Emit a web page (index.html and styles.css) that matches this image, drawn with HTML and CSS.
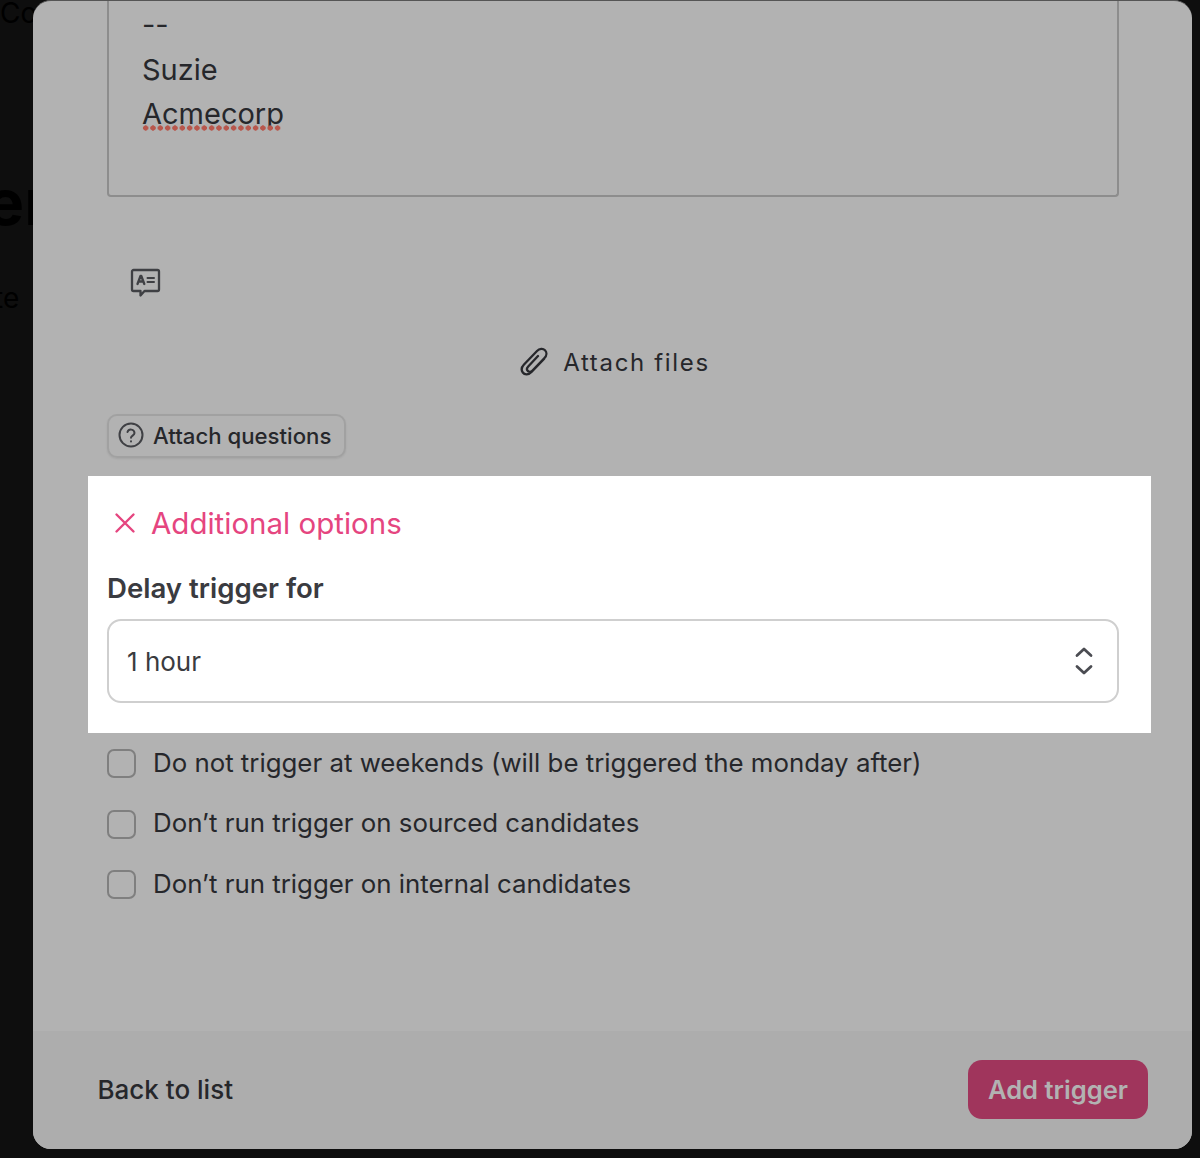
FILE: index.html
```html
<!DOCTYPE html>
<html lang="en">

<head>
    <meta charset="UTF-8" />
    <meta name="viewport" content="width=device-width, initial-scale=1.0" />
    <title>Add trigger</title>
    <link rel="stylesheet" href="styles.css">
</head>

<body>
    <div class="behind">
        <span class="behind-co">Co</span>
        <span class="behind-er">er</span>
        <span class="behind-te">te</span>
    </div>

    <div class="modal">
        <div class="modal-body">
            <div class="message">
                <div class="message-line dashes">--</div>
                <div class="message-line">Suzie</div>
                <div class="message-line"><span class="misspelled">Acmecorp</span></div>
            </div>

            <div class="template-icon">
                <svg width="32" height="32" viewBox="0 0 32 32" fill="none" stroke="#3f4044" stroke-width="2.300" stroke-linejoin="round" stroke-linecap="round">
                    <path d="M3.500 3h24a1.500 1.500 0 0 1 1.500 1.500v18a1.500 1.500 0 0 1-1.500 1.500h-13l-4 4.500v-4.500h-7a1.500 1.500 0 0 1-1.500-1.500v-18a1.500 1.500 0 0 1 1.500-1.500z" />
                    <path d="M7.500 17l3-8h.8l3 8M8.600 14.500h4.600" />
                    <path d="M17.500 11h6.500M17.500 15h6.500" stroke-width="2" />
                </svg>
            </div>

            <div class="attach-files">
                <svg width="28" height="30" viewBox="0 0 28 30" fill="none" stroke="#26272b" stroke-width="2.300" stroke-linecap="round" stroke-linejoin="round">
                    <path d="M24 12L11.500 25C8.500 28.200 4.500 28 2.800 25.500C1 23 1.600 20 4 17.500L17 4C19.500 1.400 23 1.200 25 3.200C27 5.200 26.800 8.500 24.500 11L12.500 23.500C11 25 9 25 7.800 24C6.600 22.800 6.800 21 8.200 19.500L18 9" />
                </svg>
                <span>Attach files</span>
            </div>

            <div class="attach-questions">
                <svg width="26" height="26" viewBox="0 0 26 26" fill="none" stroke="#3f4044" stroke-width="2" stroke-linecap="round" stroke-linejoin="round">
                    <circle cx="13" cy="13" r="11.500" />
                    <path d="M9.500 10a3.600 3.600 0 0 1 7 1.100c0 2.400-3.500 2.700-3.500 4.700" />
                    <path d="M13 19.200v.2" />
                </svg>
                <span>Attach questions</span>
            </div>

            <div class="highlight">
                <div class="options-toggle">
                    <svg width="22" height="22" viewBox="0 0 22 22" fill="none" stroke="#e5457f" stroke-width="2.400" stroke-linecap="round">
                        <path d="M2.500 2.500l17 17M19.500 2.500l-17 17" />
                    </svg>
                    <span>Additional options</span>
                </div>
                <div class="field-label">Delay trigger for</div>
                <div class="select">
                    <span>1 hour</span>
                    <svg width="18" height="28" viewBox="0 0 18 28" fill="none" stroke="#4b4c52" stroke-width="2.800" stroke-linecap="round" stroke-linejoin="round">
                        <path d="M2 8.500l7-6.500 7 6.500M2 19.500l7 6.500 7-6.500" />
                    </svg>
                </div>
            </div>

            <div class="checks">
                <label class="check"><span class="box"></span>Do not trigger at weekends (will be triggered the monday after)</label>
                <label class="check"><span class="box"></span>Don’t run trigger on sourced candidates</label>
                <label class="check"><span class="box"></span>Don’t run trigger on internal candidates</label>
            </div>
        </div>

        <div class="modal-footer">
            <span class="back">Back to list</span>
            <span class="add-btn">Add trigger</span>
        </div>
    </div>
</body>

</html>
```

FILE: styles.css
```css
* {
    margin: 0;
    padding: 0;
    box-sizing: border-box;
}

body {
    position: relative;
    width: 1200px;
    height: 1158px;
    overflow: hidden;
    background: #0e0e0e;
    font-family: Inter, "Liberation Sans", sans-serif;
    color: #26272b;
}

/* page behind the overlay */
.behind span {
    position: absolute;
    color: #000;
}

.behind-co {
    left: 0;
    top: -4px;
    font-size: 28px;
}

.behind-er {
    left: -14px;
    top: 163px;
    font-size: 64px;
    font-weight: 700;
}

.behind-te {
    left: -6px;
    top: 281px;
    font-size: 28px;
}

.modal {
    position: relative;
    display: flex;
    flex-direction: column;
    width: 1159px;
    height: 1149px;
    margin-left: 33px;
    background: #b2b2b2;
    border-radius: 18px;
    border-top: 1px solid #555;
    overflow: hidden;
}

.modal-body {
    flex: 1;
    padding: 0 73px 0 74px;
}

.message {
    height: 197px;
    margin-top: -1px;
    padding: 3px 33px 0;
    border: 2px solid #8d8d8d;
    border-top: 0;
    border-radius: 0 0 4px 4px;
    font-size: 29px;
    line-height: 44.500px;
}

.misspelled {
    position: relative;
    display: inline-block;
}

/* spellcheck squiggle */
.misspelled::after {
    content: "";
    position: absolute;
    left: 0;
    top: 33px;
    width: 139px;
    height: 6px;
    background: radial-gradient(circle at center, #b8574c 2.400px, transparent 2.900px) 0 0 / 7.330px 6px repeat-x;
}

.template-icon {
    height: 32px;
    margin-top: 70px;
    margin-left: 23px;
}

.attach-files {
    display: flex;
    justify-content: center;
    align-items: center;
    gap: 15px;
    height: 30px;
    margin-top: 48px;
    margin-left: 4px;
    font-size: 24px;
    letter-spacing: 1.670px;
}

.attach-questions {
    display: inline-flex;
    align-items: center;
    gap: 9px;
    height: 44px;
    margin-top: 37px;
    padding: 0 13px 2px 9px;
    border: 2px solid #a1a1a1;
    border-radius: 10px;
    box-shadow: 0 1px 2px rgba(0, 0, 0, .08);
    font-size: 22.200px;
    font-weight: 500;
}

.highlight {
    height: 257px;
    margin: 18px -32px 0 -19px;
    padding: 28px 32px 0 19px;
    background: #fff;
}

.options-toggle {
    display: flex;
    align-items: center;
    gap: 15px;
    height: 38px;
    padding-left: 7px;
    font-size: 29.500px;
    color: #e5457f;
}

.field-label {
    margin-top: 28px;
    font-size: 27.600px;
    line-height: 36px;
    font-weight: 600;
    color: #3a3b40;
}

.select {
    display: flex;
    justify-content: space-between;
    align-items: center;
    height: 84px;
    margin-top: 13px;
    padding: 0 24px 0 18px;
    border: 2px solid #cfcfcf;
    border-radius: 14px;
    font-size: 26px;
    color: #3a3b40;
}

.checks {
    display: flex;
    flex-direction: column;
    gap: 24.500px;
    margin-top: 11px;
}

.check {
    display: flex;
    align-items: center;
    gap: 17px;
    height: 36px;
    font-size: 25.840px;
}

.box {
    width: 29px;
    height: 29px;
    margin-top: 3px;
    border: 2px solid #7f7f7f;
    border-radius: 7px;
}

.modal-footer {
    display: flex;
    justify-content: space-between;
    align-items: center;
    height: 118px;
    padding: 0 44px 2px 64.500px;
    background: #adadad;
}

.back {
    font-size: 26px;
    font-weight: 500;
}

.add-btn {
    display: flex;
    align-items: center;
    height: 59px;
    padding: 0 20px;
    border-radius: 14px;
    background: #a0355c;
    color: #b2b2b2;
    font-size: 25.600px;
    font-weight: 600;
}
```
